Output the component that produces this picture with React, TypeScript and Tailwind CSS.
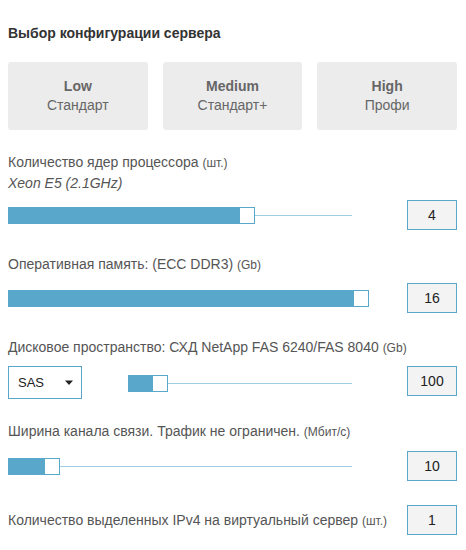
import { useState } from "react";

type SliderProps = { track: number; fill: number };

function Slider({ track, fill }: SliderProps) {
  return (
    <div className="relative h-[17px]" style={{ width: track }}>
      <div className="absolute left-0 right-0 top-[8px] h-px bg-[#9fcde3]" />
      <div className="absolute left-0 top-0 h-[17px] bg-[#5aa7cc]" style={{ width: fill }} />
      <div
        className="absolute top-0 h-[17px] w-[16px] bg-white border border-[#5aa7cc]"
        style={{ left: fill }}
      />
    </div>
  );
}

function ValueBox({ value }: { value: string }) {
  return (
    <div className="ml-auto w-[50px] h-[30px] flex items-center justify-center bg-[#f3f3f3] border border-[#5aa7cc] text-[14px] text-[#222]">
      {value}
    </div>
  );
}

const presets = [
  { name: "Low", sub: "Стандарт" },
  { name: "Medium", sub: "Стандарт+" },
  { name: "High", sub: "Профи" },
];

export default function App() {
  const [disk] = useState("SAS");

  return (
    <div className="w-[466px] h-[550px] bg-white pl-[8px] pr-[9px] font-['Liberation_Sans',Arial,sans-serif] text-[#555]">
      <h2 className="pt-[25px] text-[14px] leading-[16px] font-bold text-[#333]">
        Выбор конфигурации сервера
      </h2>

      <div className="mt-[21px] grid grid-cols-3 gap-[15px]">
        {presets.map((p) => (
          <button
            key={p.name}
            className="h-[68px] rounded-[3px] bg-[#ececec] flex flex-col items-center justify-center text-[#666]"
          >
            <span className="text-[14px] leading-[19px] font-bold">{p.name}</span>
            <span className="text-[14px] leading-[19px]">{p.sub}</span>
          </button>
        ))}
      </div>

      {/* CPU */}
      <div className="mt-[22px] text-[14px] leading-[20px]">
        Количество ядер процессора <span className="text-[12px]">(шт.)</span>
      </div>
      <div className="text-[14px] leading-[20px] italic">Xeon E5 (2.1GHz)</div>
      <div className="mt-[7px] h-[30px] flex items-center">
        <Slider track={344} fill={231} />
        <ValueBox value="4" />
      </div>

      {/* RAM */}
      <div className="mt-[24px] text-[14px] leading-[20px]">
        Оперативная память: (ECC DDR3) <span className="text-[12px]">(Gb)</span>
      </div>
      <div className="mt-[8px] h-[30px] flex items-center">
        <Slider track={344} fill={345} />
        <ValueBox value="16" />
      </div>

      {/* Disk */}
      <div className="mt-[24px] text-[14px] leading-[20px]">
        Дисковое пространство: СХД NetApp FAS 6240/FAS 8040 <span className="text-[12px]">(Gb)</span>
      </div>
      <div className="mt-[8px] h-[33px] flex items-start">
        <div className="w-[74px] h-[33px] border border-[#5aa7cc] bg-white flex items-center justify-between pl-[9px] pr-[6px] text-[13px] text-[#222]">
          <span>{disk}</span>
          <svg width="10" height="6" viewBox="0 0 10 6" className="mr-[1px]">
            <path d="M1 0.5h8L5 5z" fill="#222" />
          </svg>
        </div>
        <div className="ml-[46px] mt-[9px]">
          <Slider track={224} fill={24} />
        </div>
        <ValueBox value="100" />
      </div>

      {/* Bandwidth */}
      <div className="mt-[22px] text-[14px] leading-[20px]">
        Ширина канала связи. Трафик не ограничен. <span className="text-[12px]">(Мбит/с)</span>
      </div>
      <div className="mt-[9px] h-[30px] flex items-center">
        <Slider track={344} fill={36} />
        <ValueBox value="10" />
      </div>

      {/* IPv4 */}
      <div className="mt-[24px] h-[30px] flex items-center">
        <span className="text-[14px] leading-[20px]">
          Количество выделенных IPv4 на виртуальный сервер <span className="text-[12px]">(шт.)</span>
        </span>
        <ValueBox value="1" />
      </div>
    </div>
  );
}
